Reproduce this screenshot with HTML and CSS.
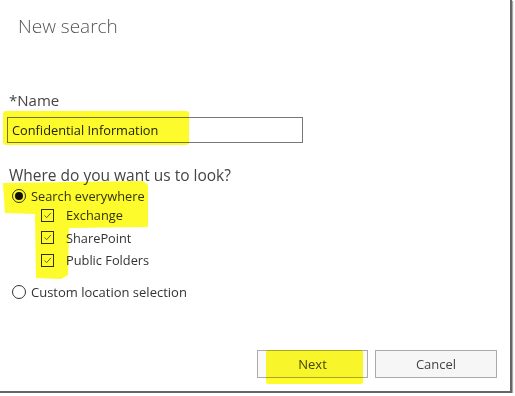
FILE: index.html
```html
<!DOCTYPE html>
<html lang="en">

<head>
    <meta charset="UTF-8">
    <meta name="viewport" content="width=device-width, initial-scale=1.0">
    <title>New search</title>
    <link rel="stylesheet" href="styles.css">
</head>

<body>

    <div class="dialog">
        <h1 class="title">New search</h1>

        <div class="field">
            <label class="label" for="name">*Name</label>
            <div class="input" id="name">Confidential Information</div>
        </div>

        <div class="field where">
            <p class="label">Where do you want us to look?</p>

            <div class="row top">
                <span class="radio checked"></span>
                <span class="opt">Search everywhere</span>
            </div>
            <div class="subs">
                <div class="row sub">
                    <span class="check"><svg viewBox="0 0 13 13"><path d="M3 6.5 L5.5 9 L10.5 3.5" /></svg></span>
                    <span class="opt">Exchange</span>
                </div>
                <div class="row sub">
                    <span class="check"><svg viewBox="0 0 13 13"><path d="M3 6.5 L5.5 9 L10.5 3.5" /></svg></span>
                    <span class="opt">SharePoint</span>
                </div>
                <div class="row sub">
                    <span class="check"><svg viewBox="0 0 13 13"><path d="M3 6.5 L5.5 9 L10.5 3.5" /></svg></span>
                    <span class="opt">Public Folders</span>
                </div>
            </div>
            <div class="row custom">
                <span class="radio"></span>
                <span class="opt">Custom location selection</span>
            </div>
        </div>

        <div class="buttons">
            <button class="btn next">Next</button>
            <button class="btn cancel">Cancel</button>
        </div>

        <!-- highlighter marks over the screenshot -->
        <div class="mark mark-name"></div>
        <div class="mark mark-where"></div>
        <div class="mark mark-next"></div>
    </div>

</body>

</html>
```

FILE: styles.css
```css
body {
    margin: 0;
    background-color: white;
    font-family: "Open Sans", "Noto Sans", sans-serif;
    color: #444;
}

.dialog {
    position: relative;
    width: 510px;
    height: 391px;
    background-color: white;
    border-right: 2px solid #666;
    border-bottom: 2px solid #666;
    box-shadow: 1px 1px 1px #aaa;
    overflow: hidden;
}

.title {
    margin: 0;
    padding: 12px 0 0 18px;
    font-size: 19px;
    font-weight: 300;
    line-height: 28px;
    color: #555;
}

.field {
    padding-left: 7px;
}

.label {
    display: block;
    margin: 51px 0 0 2px;
    font-size: 15px;
    line-height: 18px;
    color: #444;
}

.input {
    box-sizing: border-box;
    width: 296px;
    height: 26px;
    margin-top: 8px;
    padding-left: 4px;
    border: 1px solid #777;
    font-size: 12.8px;
    line-height: 24px;
    color: #222;
}

.where .label {
    margin-top: 23px;
    font-size: 15.5px;
}

.row {
    display: flex;
    align-items: center;
    height: 22px;
}

.row.top {
    height: 20px;
    margin-top: 2px;
}

.radio {
    box-sizing: border-box;
    width: 14px;
    height: 14px;
    margin-left: 5px;
    margin-right: 5px;
    border: 1px solid #333;
    border-radius: 50%;
    display: flex;
    align-items: center;
    justify-content: center;
}

.radio.checked::after {
    content: "";
    width: 8px;
    height: 8px;
    border-radius: 50%;
    background-color: #111;
}

.opt {
    font-size: 12.8px;
    color: #333;
}

.subs {
    margin-top: -2px;
    padding-left: 34px;
}

.sub {
    height: 22.5px;
}

.check {
    box-sizing: border-box;
    width: 13px;
    height: 13px;
    margin-right: 12px;
    border: 1px solid #333;
    display: flex;
}

.check svg {
    width: 11px;
    height: 11px;
}

.check path {
    fill: none;
    stroke: #444;
    stroke-width: 1;
}

.custom {
    margin-top: 9.5px;
}

.custom .opt {
    font-size: 13px;
}

.buttons {
    display: flex;
    gap: 7px;
    padding: 47px 0 0 257px;
}

.btn {
    box-sizing: border-box;
    height: 28px;
    border: 1px solid #aaa;
    background-color: #f6f6f6;
    font-family: "Open Sans", "Noto Sans", sans-serif;
    font-size: 13px;
    color: #444;
}

.next {
    width: 111px;
    background-color: #fafafa;
}

.cancel {
    width: 122px;
}

.mark {
    position: absolute;
    background-color: #fdfb2c;
    mix-blend-mode: multiply;
}

.mark-name {
    left: 3px;
    top: 111px;
    width: 186px;
    height: 34px;
    border-radius: 3px;
}

.mark-where {
    left: 3px;
    top: 181px;
    width: 145px;
    height: 98px;
    clip-path: polygon(0 2px, 140px 0, 145px 4px, 145px 46px, 66px 47px, 65px 94px, 58px 98px, 33px 97px, 32px 33px, 2px 32px);
}

.mark-next {
    left: 266px;
    top: 350px;
    width: 97px;
    height: 34px;
    border-radius: 2px;
}
```
